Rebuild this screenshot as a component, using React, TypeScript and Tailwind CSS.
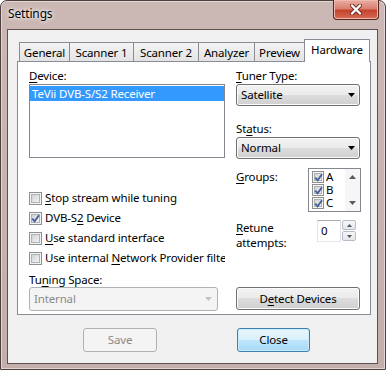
import React from "react";

function U({ children }: { children: React.ReactNode }) {
  return <span className="underline decoration-1 underline-offset-[2px]">{children}</span>;
}

function CheckBox({ checked, small }: { checked?: boolean; small?: boolean }) {
  return (
    <span
      className={`relative flex shrink-0 border border-[#8e8f8f] bg-[#f4f4f4] p-[1px] ${
        small ? "h-[12px] w-[12px]" : "h-[13px] w-[13px]"
      }`}
    >
      <span className="h-full w-full border border-[#aeb2b7] bg-[linear-gradient(135deg,#cfd2d6,#f3f3f4)]" />
      {checked && (
        <svg className="absolute left-0 top-0" width="11" height="11" viewBox="0 0 11 11">
          <path d="M2.2 5.6 L4.6 8.2 L9 2.2" fill="none" stroke="#4a5f98" strokeWidth="1.9" />
        </svg>
      )}
    </span>
  );
}

function Arrow({ color = "#000" }: { color?: string }) {
  return (
    <svg width="7" height="4" viewBox="0 0 7 4">
      <path d="M0 0 H7 L3.5 4 Z" fill={color} />
    </svg>
  );
}

function Combo({ text, disabled }: { text: string; disabled?: boolean }) {
  if (disabled) {
    return (
      <div className="flex h-[24px] w-[189px] items-center justify-between rounded-[3px] border border-[#adb2b5] bg-[#f4f4f4] pl-[4px] pr-[5px] text-[#8a8a8a]">
        <span>{text}</span>
        <Arrow color="#c2c2c2" />
      </div>
    );
  }
  return (
    <div className="flex h-[22px] w-[124px] items-center justify-between rounded-[3px] border border-[#707070] bg-[linear-gradient(to_bottom,#f2f2f2_0%,#ebebeb_50%,#dddddd_50%,#cfcfcf_100%)] pl-[4px] pr-[4px] shadow-[inset_0_0_0_1px_#fbfbfb]">
      <span>{text}</span>
      <Arrow />
    </div>
  );
}

function CheckRow({ checked, children }: { checked?: boolean; children: React.ReactNode }) {
  return (
    <div className="flex h-[20px] w-[196px] items-center gap-[3px] overflow-hidden whitespace-nowrap">
      <CheckBox checked={checked} />
      <span>{children}</span>
    </div>
  );
}

const tabs = [
  { name: "General", w: "w-[51px]" },
  { name: "Scanner 1", w: "w-[65px]" },
  { name: "Scanner 2", w: "w-[66px]" },
  { name: "Analyzer", w: "w-[57px]" },
  { name: "Preview", w: "w-[51px]" },
];

export default function App() {
  return (
    <div className="h-[370px] w-[386px] overflow-hidden bg-white font-['Noto_Sans',sans-serif] text-[11.5px] leading-[16px] tracking-[-0.15px] text-black">
      <div className="flex h-[370px] w-[386px] flex-col rounded-t-[7px] border border-[#4e403e] bg-[linear-gradient(to_bottom,#cbb7b4,#c3aeab)] shadow-[inset_0_0_0_1px_#e2d6d4]">
        {/* title bar */}
        <div className="flex h-[28px] justify-between">
          <div className="pl-[7px] pt-[5px] text-[12px] [text-shadow:0_0_6px_#fff,0_0_3px_#fff]">Settings</div>
          <div className="-mt-px mr-[6px] flex h-[20px] w-[46px] items-center justify-center rounded-b-[4px] border border-t-0 border-[#5a2620] bg-[linear-gradient(to_bottom,#e9aea4_0%,#d9806f_45%,#c5432d_55%,#d46d55_100%)] shadow-[inset_0_0_0_1px_#f0b9ae]">
            <svg width="14" height="11" viewBox="0 0 14 11">
              <path d="M3 1.5 L11 9.5 M11 1.5 L3 9.5" stroke="#6b2a22" strokeWidth="4" strokeLinecap="round" />
              <path d="M3 1.5 L11 9.5 M11 1.5 L3 9.5" stroke="#ffffff" strokeWidth="2.4" strokeLinecap="round" />
            </svg>
          </div>
        </div>

        {/* client */}
        <div className="ml-[6px] h-[335px] w-[371px] border border-[#5e504e] bg-[#f0f0f0]">
          <div className="ml-[9px] mt-[9px] w-[354px]">
            {/* tabs */}
            <div className="flex h-[22px] items-end pl-[2px]">
              {tabs.map((t, i) => (
                <div
                  key={t.name}
                  className={`flex h-[19px] items-center justify-center border border-b-0 border-[#898c95] bg-[linear-gradient(to_bottom,#f3f3f3,#e3e3e3)] pt-[1px] ${t.w} ${
                    i > 0 ? "-ml-px" : ""
                  }`}
                >
                  {t.name}
                </div>
              ))}
              <div className="relative z-10 -mb-px -ml-px flex h-[23px] w-[66px] items-start justify-center border border-b-0 border-[#898c95] bg-white pt-[2px]">
                Hardware
              </div>
            </div>

            {/* panel */}
            <div className="flex h-[254px] border border-[#898c95] bg-white pl-[11px] pt-[6px]">
              {/* left column */}
              <div className="flex w-[196px] flex-col">
                <div className="h-[16px]">
                  <U>D</U>evice:
                </div>
                <div className="h-[74px] border border-[#828790] bg-white pt-[1px]">
                  <div className="h-[15px] bg-[#3399ff] pl-[2px] leading-[15px] text-white">TeVii DVB-S/S2 Receiver</div>
                </div>
                <div className="mt-[30px] flex flex-col">
                  <CheckRow>
                    <U>S</U>top stream while tuning
                  </CheckRow>
                  <CheckRow checked>
                    DVB-S<U>2</U> Device
                  </CheckRow>
                  <CheckRow>
                    <U>U</U>se standard interface
                  </CheckRow>
                  <CheckRow>
                    Use internal <U>N</U>etwork Provider filter
                  </CheckRow>
                </div>
                <div className="mt-[4px] h-[15px] leading-[15px]">
                  Tu<U>n</U>ing Space:
                </div>
                <Combo text="Internal" disabled />
              </div>

              {/* right column */}
              <div className="ml-[11px] flex w-[124px] flex-col">
                <div className="h-[16px]">
                  <U>T</U>uner Type:
                </div>
                <Combo text="Satellite" />
                <div className="mt-[15px] h-[16px]">
                  St<U>a</U>tus:
                </div>
                <Combo text="Normal" />

                <div className="mt-[9px] flex">
                  <div className="pt-[1px]">
                    <U>G</U>roups:
                  </div>
                  <div className="-mr-px ml-auto flex h-[44px] w-[53px] border border-[#828790] bg-white">
                    <div className="flex flex-1 flex-col overflow-hidden pl-[3px] pt-[1px]">
                      {["A", "B", "C"].map((g) => (
                        <div key={g} className="flex h-[13px] shrink-0 items-center gap-[2px] leading-[13px]">
                          <CheckBox checked small />
                          <span>{g}</span>
                        </div>
                      ))}
                    </div>
                    <div className="flex w-[15px] flex-col items-center justify-between bg-[#f6f6f6] py-[6px]">
                      <svg width="7" height="4" viewBox="0 0 7 4">
                        <path d="M0 4 H7 L3.5 0 Z" fill="#5a5a5a" />
                      </svg>
                      <svg width="7" height="4" viewBox="0 0 7 4">
                        <path d="M0 0 H7 L3.5 4 Z" fill="#5a5a5a" />
                      </svg>
                    </div>
                  </div>
                </div>

                <div className="mt-[8px] flex">
                  <div className="w-[81px] leading-[15px]">
                    <U>R</U>etune
                    <br />
                    attempts:
                  </div>
                  <div className="flex h-[22px] w-[24px] items-center border border-[#abadb3] border-b-[#e3e9ef] border-l-[#e2e3ea] border-r-[#dbdfe6] bg-white pl-[3px]">
                    0
                  </div>
                  <div className="ml-[1px] flex w-[14px] flex-col gap-[1px]">
                    <div className="flex h-[10px] items-center justify-center rounded-[2px] border border-[#b5bcc7] bg-[linear-gradient(to_bottom,#f7f7f7,#e4e6ea)]">
                      <svg width="5" height="3" viewBox="0 0 5 3">
                        <path d="M0 3 H5 L2.5 0 Z" fill="#4d5667" />
                      </svg>
                    </div>
                    <div className="flex h-[10px] items-center justify-center rounded-[2px] border border-[#b5bcc7] bg-[linear-gradient(to_bottom,#f7f7f7,#e4e6ea)]">
                      <svg width="5" height="3" viewBox="0 0 5 3">
                        <path d="M0 0 H5 L2.5 3 Z" fill="#4d5667" />
                      </svg>
                    </div>
                  </div>
                </div>

                <div className="mt-[37px] flex h-[23px] w-[124px] items-center justify-center rounded-[3px] border border-[#707070] bg-[linear-gradient(to_bottom,#f2f2f2_0%,#ebebeb_50%,#dddddd_50%,#cfcfcf_100%)] shadow-[inset_0_0_0_1px_#fbfbfb]">
                  <span>
                    D<U>e</U>tect Devices
                  </span>
                </div>
              </div>
            </div>
          </div>

          {/* bottom buttons */}
          <div className="mt-[13px] flex">
            <div className="ml-[75px] flex h-[24px] w-[74px] items-center justify-center rounded-[3px] border border-[#adb2b5] bg-[#f4f4f4] text-[#8a8a8a]">
              Save
            </div>
            <div className="ml-[80px] flex h-[24px] w-[73px] items-center justify-center rounded-[3px] border border-[#3c7fb1] bg-[linear-gradient(to_bottom,#eaf6fd_0%,#d9f0fc_50%,#bee6fd_50%,#a7d9f5_100%)] shadow-[inset_0_0_0_1px_#c8ecfd]">
              Close
            </div>
          </div>
        </div>
      </div>
    </div>
  );
}
